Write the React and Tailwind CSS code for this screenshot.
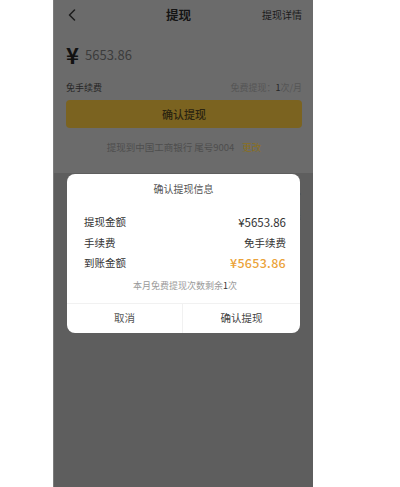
import React from "react";

const font = { fontFamily: '"Noto Sans CJK SC", "Noto Sans", sans-serif' };

function Row({ label, value, valueClass }) {
  return (
    <div className="h-[20.5px] flex items-center justify-between">
      <span className="text-[10.5px] text-[#333333]">{label}</span>
      <span className={valueClass}>{value}</span>
    </div>
  );
}

export default function App() {
  return (
    <div className="w-[400px] h-[487px] bg-white flex" style={font}>
      <div className="ml-[53px] w-[260px] h-full relative flex flex-col bg-[#5e5e5e] border-l border-[#7c7c7c]">
        <div className="h-[173px] bg-[#6b6b6b] pl-[12px] pr-[11px] flex flex-col">
          <div className="h-[30px] flex items-center">
            <div className="w-[100px] flex items-center">
              <svg width="10" height="12" viewBox="0 0 10 12" className="ml-[1px]">
                <path d="M7.5 1 L2.5 6 L7.5 11" fill="none" stroke="#1c1c1c" strokeWidth="1.5" strokeLinecap="round" strokeLinejoin="round" />
              </svg>
            </div>
            <span className="text-[12.5px] font-bold text-[#141414] leading-none">提现</span>
            <div className="flex-1 text-right text-[10px] text-[#1c1c1c] leading-none">提现详情</div>
          </div>
          <div className="h-[48px] flex items-center">
            <span className="text-[22px] font-bold text-[#111111] leading-none">¥</span>
            <span className="ml-[6px] text-[13px] text-[#3c3c3c] leading-none">5653.86</span>
          </div>
          <div className="h-[18px] flex items-center justify-between">
            <span className="text-[9px] text-[#262626] leading-none">免手续费</span>
            <span className="text-[9px] text-[#555555] leading-none">
              免费提现：<span className="text-[#262626]">1</span>次/月
            </span>
          </div>
          <div className="mt-[4px] h-[28px] rounded-[4px] bg-[#7b6320] flex items-center justify-center">
            <span className="text-[11px] font-medium text-[#2b2410] leading-none">确认提现</span>
          </div>
          <div className="h-[40px] flex items-center justify-center">
            <span className="text-[9.5px] text-[#4e4e4e] leading-none">提现到中国工商银行 尾号9004</span>
            <span className="ml-[8px] text-[9.5px] text-[#8a7020] leading-none">更改</span>
          </div>
        </div>
        <div className="flex-1 pl-[12px] pr-[12px] pt-[13px] flex flex-col">
          <div className="h-[14px] flex items-center justify-end">
            <span className="text-[9px] text-[#4a4a4a] leading-none">›</span>
          </div>
          <div className="mt-[8px] h-[14px] flex items-center justify-between">
            <span className="text-[9px] text-[#4a4a4a] leading-none">·</span>
            <span className="text-[9px] text-[#4a4a4a] leading-none">退</span>
          </div>
        </div>

        <div className="absolute left-[13px] top-[174px] w-[233px] h-[159px] bg-white rounded-[8px] flex flex-col overflow-hidden">
          <div className="h-[30px] flex items-center justify-center">
            <span className="text-[10px] text-[#555555] leading-none">确认提现信息</span>
          </div>
          <div className="mt-[8px] pl-[17px] pr-[14px] flex flex-col">
            <Row label="提现金额" value="¥5653.86" valueClass="text-[11.5px] text-[#333333]" />
            <Row label="手续费" value="免手续费" valueClass="text-[10.5px] text-[#333333]" />
            <Row label="到账金额" value="¥5653.86" valueClass="text-[12.5px] font-medium text-[#eba33a] tracking-[0.3px]" />
            <div className="h-[23px] flex items-center justify-center">
              <span className="text-[9px] text-[#9a9a9a] leading-none">
                本月免费提现次数剩余<span className="text-[#333333]">1</span>次
              </span>
            </div>
          </div>
          <div className="mt-auto h-[30px] border-t border-[#f1f1f1] flex">
            <div className="w-[116px] flex items-center justify-center border-r border-[#f1f1f1]">
              <span className="text-[10.5px] text-[#555555] leading-none">取消</span>
            </div>
            <div className="flex-1 flex items-center justify-center">
              <span className="text-[10.5px] text-[#444444] leading-none">确认提现</span>
            </div>
          </div>
        </div>
      </div>
    </div>
  );
}
